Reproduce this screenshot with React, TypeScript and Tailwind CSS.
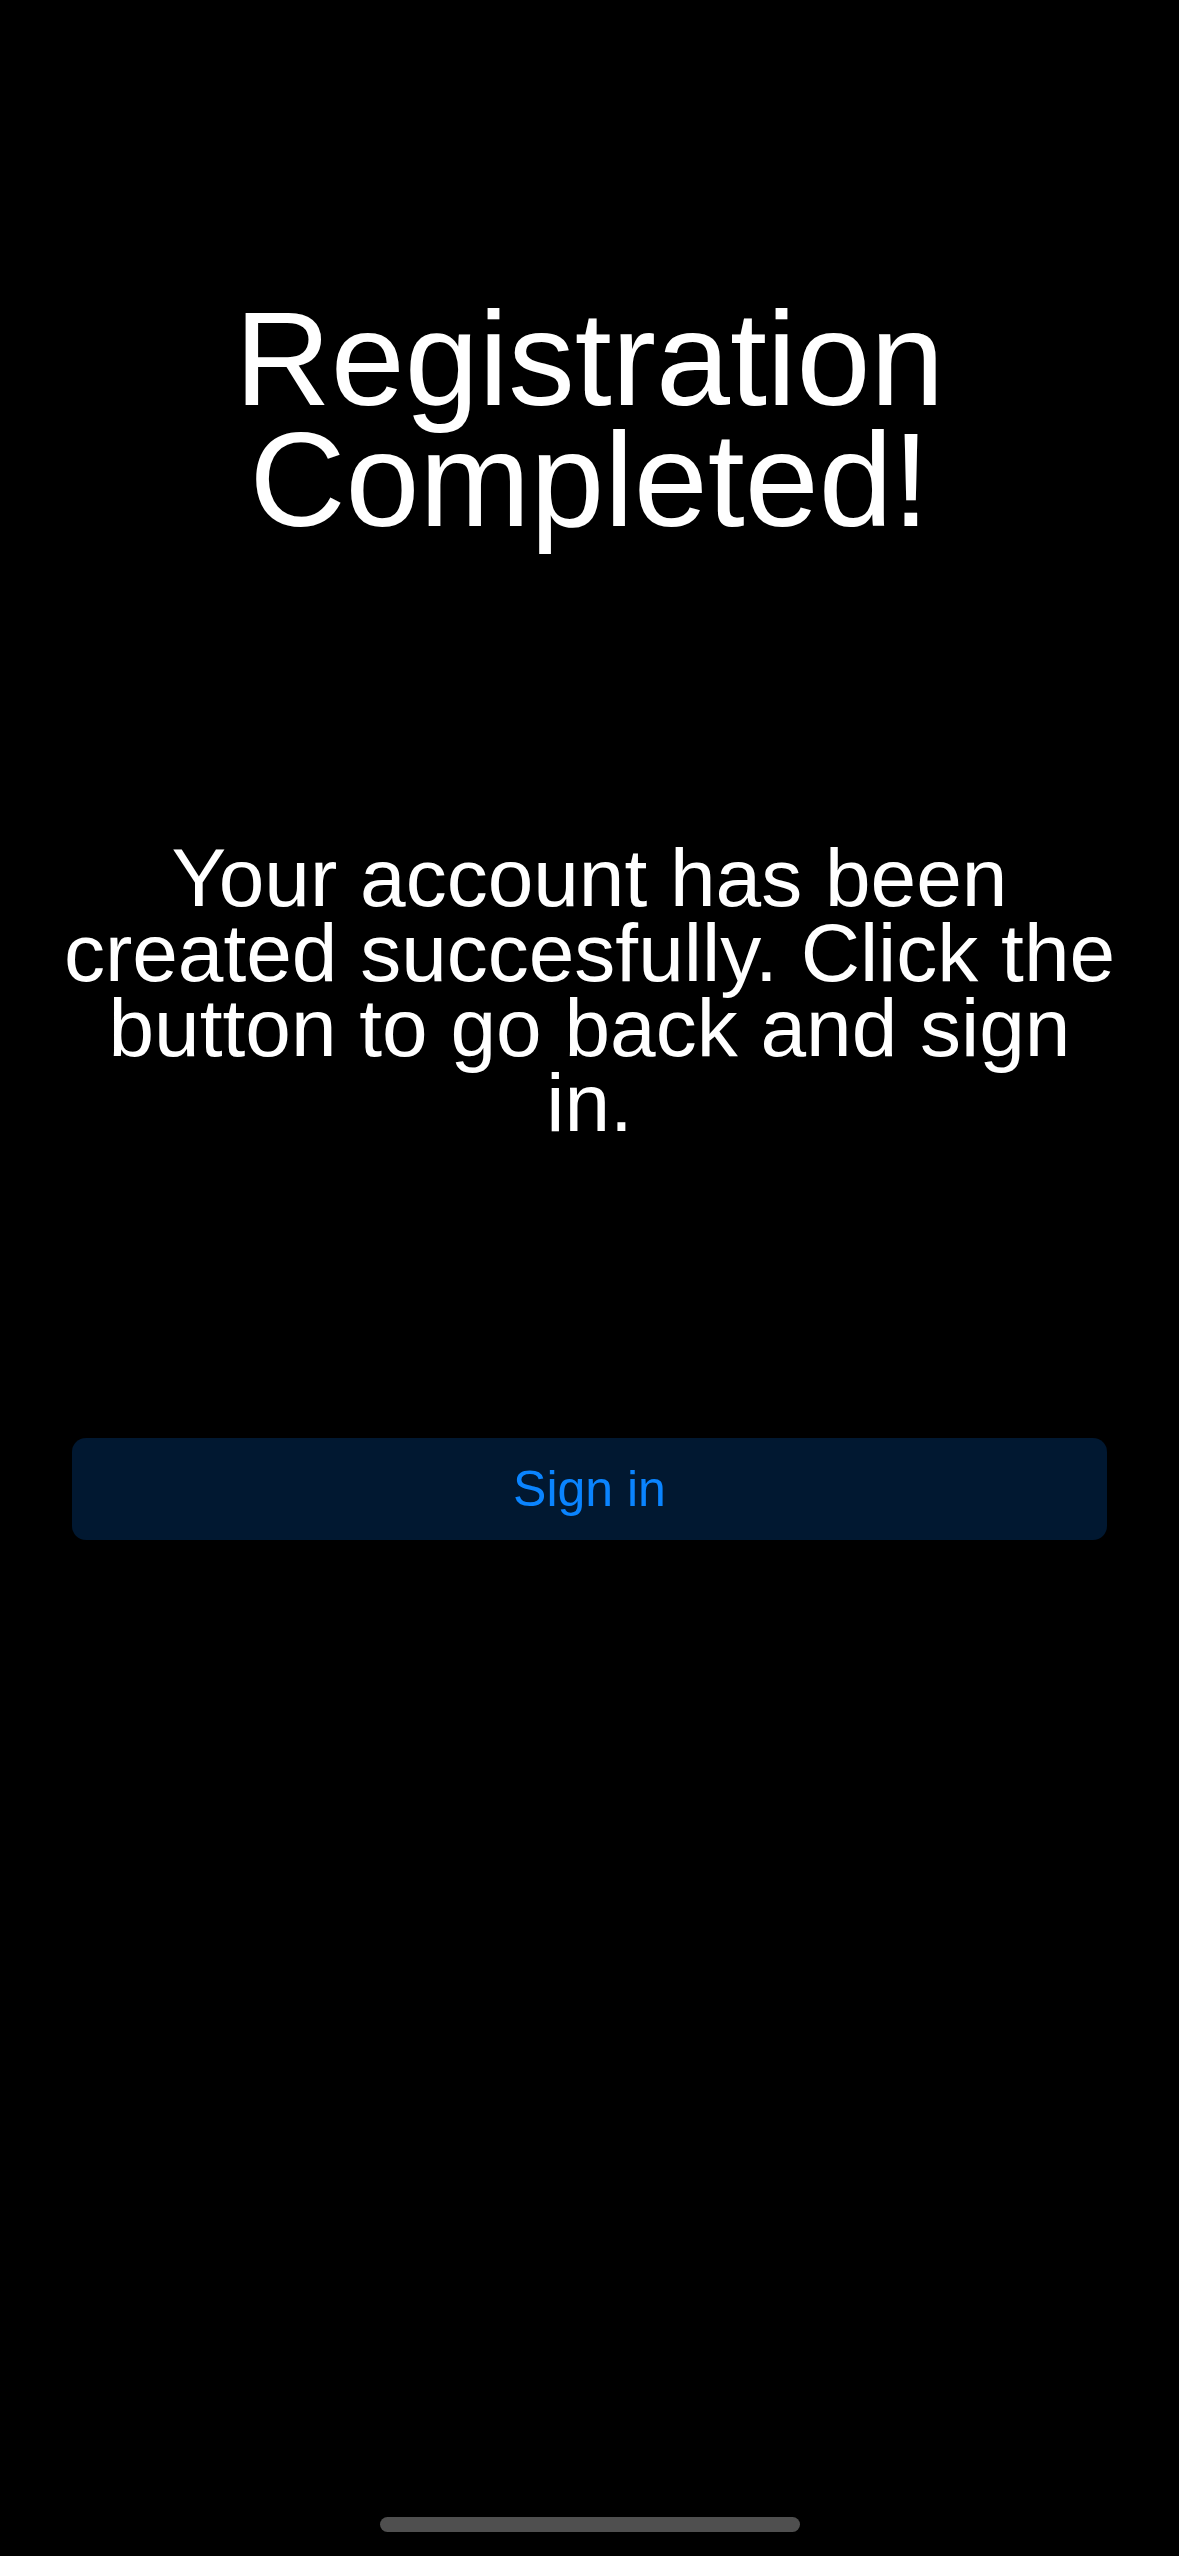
export default function App() {
  return (
    <div className="relative w-[1179px] h-[2556px] bg-black overflow-hidden font-['Liberation_Sans',Arial,sans-serif]">
      <div className="flex flex-col items-center pt-[299px]">
        <h1 className="text-center text-white text-[133px] leading-[121px] font-normal">
          Registration
          <br />
          Completed!
        </h1>
        <p className="mt-[299px] w-[1058px] text-center text-white text-[82px] leading-[75px]">
          Your account has been created succesfully. Click the button to go back
          and sign in.
        </p>
        <button className="mt-[298px] w-[1035px] h-[102px] rounded-[14px] bg-[#011831] text-[#0a84ff] text-[50px] leading-none">
          Sign in
        </button>
      </div>
      <div className="absolute bottom-[24px] left-[380px] w-[420px] h-[15px] rounded-full bg-[#4f4f4f]" />
    </div>
  );
}
